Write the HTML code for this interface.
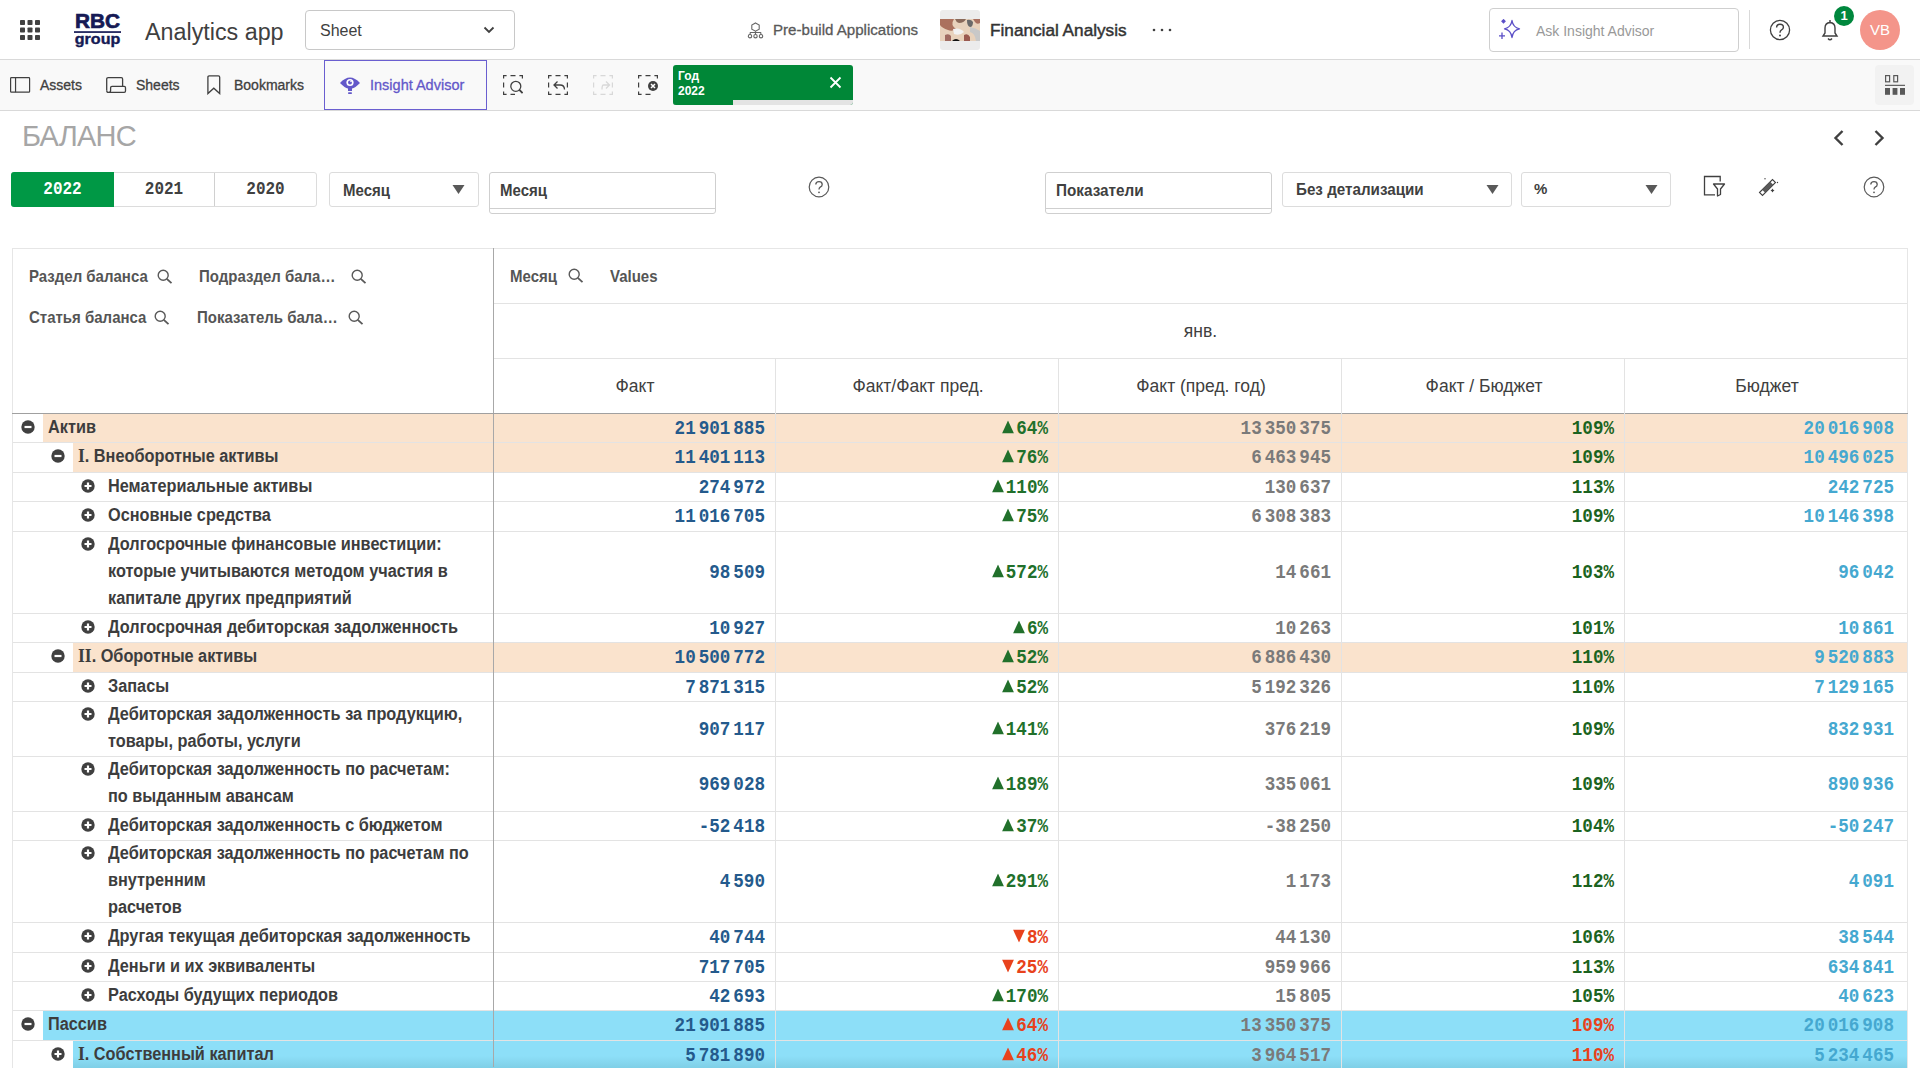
<!DOCTYPE html>
<html><head><meta charset="utf-8">
<style>
*{box-sizing:border-box;margin:0;padding:0}
html,body{width:1920px;height:1080px;overflow:hidden;background:#fff;font-family:"Liberation Sans",sans-serif;color:#404040}
.a{position:absolute}
.t{position:absolute;white-space:nowrap}
/* top bar */
#top{position:absolute;left:0;top:0;width:1920px;height:60px;background:#fff;border-bottom:1px solid #d9d9d9}
#tb{position:absolute;left:0;top:60px;width:1920px;height:51px;background:#f9f9f9;border-bottom:1px solid #d9d9d9}
.ico{position:absolute}
</style></head><body>

<div id="top">
  <!-- grid icon -->
  <svg class="ico" style="left:20px;top:20px" width="20" height="20" viewBox="0 0 20 20" fill="#404040">
    <rect x="0" y="0" width="5" height="5" rx="0.8"/><rect x="7.5" y="0" width="5" height="5" rx="0.8"/><rect x="15" y="0" width="5" height="5" rx="0.8"/>
    <rect x="0" y="7.5" width="5" height="5" rx="0.8"/><rect x="7.5" y="7.5" width="5" height="5" rx="0.8"/><rect x="15" y="7.5" width="5" height="5" rx="0.8"/>
    <rect x="0" y="15" width="5" height="5" rx="0.8"/><rect x="7.5" y="15" width="5" height="5" rx="0.8"/><rect x="15" y="15" width="5" height="5" rx="0.8"/>
  </svg>
  <!-- logo -->
  <svg class="ico" style="left:74px;top:10px" width="48" height="40" viewBox="0 0 48 40">
    <text x="1" y="18.3" font-family="Liberation Sans" font-weight="bold" font-size="20.5" fill="#161a55" stroke="#161a55" stroke-width="0.7" textLength="45" lengthAdjust="spacingAndGlyphs">RBC</text>
    <rect x="0" y="21.2" width="47" height="1.7" fill="#161a55"/>
    <text x="0.8" y="33.8" font-family="Liberation Sans" font-weight="bold" font-size="15.5" fill="#161a55" stroke="#161a55" stroke-width="0.4" textLength="45.5" lengthAdjust="spacingAndGlyphs">group</text>
  </svg>
  <div class="t" style="left:145px;top:17.5px;font:23.3px/28px 'Liberation Sans';color:#404040">Analytics app</div>
  <!-- Sheet dropdown -->
  <div class="a" style="left:305px;top:10px;width:210px;height:40px;border:1px solid #c8c8c8;border-radius:4px"></div>
  <div class="t" style="left:320px;top:20.7px;font:16px/20px 'Liberation Sans';color:#404040">Sheet</div>
  <svg class="ico" style="left:483px;top:26px" width="12" height="8" viewBox="0 0 12 8"><path d="M1.5 1.5 L6 6 L10.5 1.5" stroke="#404040" stroke-width="1.8" fill="none"/></svg>
  <!-- prebuild -->
  <svg class="ico" style="left:746px;top:20px" width="20" height="20" viewBox="0 0 20 20" fill="none" stroke="#666" stroke-width="1.1">
    <path d="M9.5 2.9 L13.2 5 V9.2 L9.5 11.2 L5.8 9.2 V5Z"/><path d="M9.5 11.2 V14.2 M4 14.8 L4.3 12.5 H14.7 L15 14.8"/><circle cx="4" cy="16.2" r="1.7"/><circle cx="9.5" cy="16.2" r="1.7"/><circle cx="15" cy="16.2" r="1.7"/>
  </svg>
  <div class="t" style="left:773px;top:20px;font:15.1px/20px 'Liberation Sans';color:#595959;-webkit-text-stroke:0.3px #595959">Pre-build Applications</div>
  <div class="a" style="left:940px;top:10px;width:40px;height:40px;background:#ececec;border-radius:3px"></div>
  <svg class="ico" style="left:940px;top:19px" width="40" height="22" viewBox="0 0 40 22">
    <rect width="40" height="22" fill="#e8d2bc"/>
    <path d="M0 0 H14 Q10 6 16 10 Q12 13 8 11 Q2 9 0 6Z" fill="#a0604c" opacity="0.85"/>
    <path d="M15 0 H26 Q24 4 19 4 Q16 3 15 0Z" fill="#8a6a5a"/>
    <path d="M27 1 Q31 0 33 3 Q33 8 30 8 Q27 7 27 1Z" fill="#6a6a6a"/>
    <path d="M33 0 H40 V4 Q37 6 35 3Z" fill="#a87060"/>
    <path d="M13 10 Q20 8 24 13 Q20 17 14 15Z" fill="#f2f2f2"/>
    <path d="M30 8 Q36 9 40 12 V22 H36 Q35 14 30 13Z" fill="#c8c8c8"/>
    <path d="M5 16 Q9 14 11 17 L11 22 H5Z" fill="#a06a60"/>
    <path d="M24 16 Q28 14 30 18 L30 22 H24Z" fill="#9a5a50"/>
    <path d="M12 22 Q16 18 20 22Z" fill="#111"/>
  </svg>
  <div class="t" style="left:990px;top:19px;font:17.2px/22px 'Liberation Sans';color:#333;-webkit-text-stroke:0.45px #333">Financial Analysis</div>
  <svg class="ico" style="left:1151px;top:27px" width="22" height="6" viewBox="0 0 22 6" fill="#404040"><circle cx="3" cy="3" r="1.3"/><circle cx="11" cy="3" r="1.3"/><circle cx="19" cy="3" r="1.3"/></svg>
  <!-- ask insight -->
  <div class="a" style="left:1489px;top:8px;width:250px;height:44px;border:1px solid #cfcfcf;border-radius:4px"></div>
  <svg class="ico" style="left:1499px;top:19px" width="24" height="22" viewBox="0 0 24 22" fill="none" stroke="#5b4fc7" stroke-width="1.3">
    <path d="M13 1.5 Q14 8.5 20.5 9.8 Q14 11 13 18.5 Q12 11 5.5 9.8 Q12 8.5 13 1.5Z" stroke-linejoin="round"/>
    <path d="M3 13.5 V20 M0 16.8 H6"/><path d="M4.5 0.8 L6 2.3 L4.5 3.8 L3 2.3Z" fill="#5b4fc7"/>
  </svg>
  <div class="t" style="left:1536px;top:21px;font:14px/20px 'Liberation Sans';color:#999">Ask Insight Advisor</div>
  <div class="a" style="left:1749px;top:10px;width:1px;height:39px;background:#d9d9d9"></div>
  <svg class="ico" style="left:1769px;top:19px" width="22" height="22" viewBox="0 0 22 22"><circle cx="11" cy="11" r="9.6" stroke="#404040" stroke-width="1.3" fill="none"/><path d="M7.6 8.4 Q7.6 5.2 11 5.2 Q14.4 5.2 14.4 8.2 Q14.4 10.2 12.3 11.2 Q11 11.9 11 13.8" stroke="#404040" stroke-width="1.4" fill="none"/><circle cx="11" cy="16.4" r="1" fill="#404040"/></svg>
  <svg class="ico" style="left:1819px;top:18px" width="22" height="24" viewBox="0 0 22 24" fill="none" stroke="#404040" stroke-width="1.4">
    <path d="M4 18 H18 L16 15 V10 Q16 5 11 4.5 Q6 5 6 10 V15 Z"/><path d="M9 20.5 Q11 23 13 20.5"/><path d="M11 2 V4.5"/>
  </svg>
  <div class="a" style="left:1834px;top:6px;width:20px;height:20px;border-radius:50%;background:#00873d"></div>
  <div class="t" style="left:1834px;top:8px;width:20px;text-align:center;font:bold 13px/16px 'Liberation Sans';color:#fff">1</div>
  <div class="a" style="left:1860px;top:10px;width:40px;height:40px;border-radius:50%;background:#f4958a"></div>
  <div class="t" style="left:1860px;top:20px;width:40px;text-align:center;font:15px/20px 'Liberation Sans';color:#fff">VB</div>
</div>

<div id="tb">
  <svg class="ico" style="left:10px;top:17px" width="21" height="16" viewBox="0 0 21 16" fill="none" stroke="#404040" stroke-width="1.2"><rect x="0.6" y="0.6" width="19" height="14.6" rx="0.8"/><path d="M5.55 0.6 V15.2"/></svg>
  <div class="t" style="left:40px;top:15px;font:14px/20px 'Liberation Sans';color:#404040;-webkit-text-stroke:0.3px #404040">Assets</div>
  <svg class="ico" style="left:106px;top:17px" width="21" height="17" viewBox="0 0 21 17" fill="none" stroke="#404040" stroke-width="1.3"><path d="M0.7 13.5 V2.2 Q0.7 0.7 2.2 0.7 H15.3 Q16.6 0.7 16.6 2 V9.4"/><path d="M0.7 13.5 Q0.7 15.4 2.5 15.4 Q4.6 15.4 4.6 13.5 V10.8 Q4.6 9.4 6 9.4 H18.2 Q19.5 9.4 19.5 10.8 V13.9 Q19.5 15.3 18.2 15.3 H2.5"/></svg>
  <div class="t" style="left:136px;top:15px;font:14px/20px 'Liberation Sans';color:#404040;-webkit-text-stroke:0.3px #404040">Sheets</div>
  <svg class="ico" style="left:207px;top:15px" width="14" height="20" viewBox="0 0 14 20" fill="none" stroke="#404040" stroke-width="1.3"><path d="M0.9 18.6 V2.2 Q0.9 0.9 2.2 0.9 H11.4 Q12.7 0.9 12.7 2.2 V18.6 L6.8 13.2 Z" stroke-linejoin="miter"/></svg>
  <div class="t" style="left:234px;top:15px;font:14px/20px 'Liberation Sans';color:#404040;-webkit-text-stroke:0.3px #404040">Bookmarks</div>
  <div class="a" style="left:324px;top:0px;width:163px;height:50px;border:1.5px solid #6a5fd0;background:#f9f9f9"></div>
  <svg class="ico" style="left:339px;top:15px" width="22" height="20" viewBox="0 0 22 20"><path d="M1 8 Q11 -3 21 8 Q16 13 13 13.5 V16 H9 V13.5 Q6 13 1 8Z" fill="#6358c9"/><circle cx="11" cy="7.5" r="3.6" fill="#fff"/><circle cx="11" cy="7.5" r="2" fill="#6358c9"/><circle cx="12" cy="6.5" r="0.8" fill="#fff"/><rect x="9" y="17.2" width="4" height="1.8" rx="0.8" fill="#6358c9"/></svg>
  <div class="t" style="left:370px;top:15px;font:14.5px/20px 'Liberation Sans';color:#6358c9;-webkit-text-stroke:0.3px #6358c9">Insight Advisor</div>
  <!-- selection tools -->
  <svg class="ico" style="left:503px;top:15px" width="20" height="20" viewBox="0 0 20 20" fill="none" stroke="#404040" stroke-width="1.2"><path d="M0.6 3.6 V0.6 H3.6 M7.5 0.6 H12.5 M16.4 0.6 H19.4 V3.6 M3.6 19.4 H0.6 V16.4 M0.6 12.5 V7.5 M7.5 19.4 H12"/><circle cx="12.8" cy="11.3" r="5" stroke-width="1.3"/><path d="M16.4 14.9 L19.6 18.2" stroke-width="1.9"/></svg>
  <svg class="ico" style="left:548px;top:15px" width="20" height="20" viewBox="0 0 20 20" fill="none" stroke="#404040" stroke-width="1.2"><path d="M0.6 3.6 V0.6 H3.6 M7.5 0.6 H12.5 M16.4 0.6 H19.4 V3.6 M19.4 7.5 V12.5 M19.4 16.4 V19.4 H16.4 M12.5 19.4 H7.5 M3.6 19.4 H0.6 V16.4 M0.6 12.5 V7.5"/><path d="M9.5 6.5 L6 10 L9.5 13.5 M6.3 10 H12 Q16.5 10 16.5 14.5" stroke-width="1.3"/></svg>
  <svg class="ico" style="left:593px;top:15px" width="20" height="20" viewBox="0 0 20 20" fill="none" stroke="#d8d8d8" stroke-width="1.2"><path d="M0.6 3.6 V0.6 H3.6 M7.5 0.6 H12.5 M16.4 0.6 H19.4 V3.6 M19.4 7.5 V12.5 M19.4 16.4 V19.4 H16.4 M12.5 19.4 H7.5 M3.6 19.4 H0.6 V16.4 M0.6 12.5 V7.5"/><path d="M13 6.5 L16.5 10 L13 13.5 M16.2 10 H10.5 Q9 10 9 14.5" stroke-width="1.3"/></svg>
  <svg class="ico" style="left:638px;top:15px" width="20" height="20" viewBox="0 0 20 20" fill="none" stroke="#404040" stroke-width="1.2"><path d="M0.6 3.6 V0.6 H3.6 M7.5 0.6 H12.5 M16.4 0.6 H19.4 V3.6 M12.5 19.4 H7.5 M3.6 19.4 H0.6 V16.4 M0.6 12.5 V7.5"/><circle cx="15" cy="11" r="5" fill="#404040" stroke="none"/><path d="M13 9 L17 13 M17 9 L13 13" stroke="#fff" stroke-width="1.5"/></svg>
  <!-- chip -->
  <div class="a" style="left:673px;top:5px;width:180px;height:40px;border-radius:3px;background:#008737;overflow:hidden">
    <div class="a" style="left:0;top:35px;width:180px;height:5px;background:#e3e3e3"></div>
    <div class="a" style="left:0;top:35px;width:60px;height:5px;background:#008737"></div>
  </div>
  <div class="t" style="left:678px;top:8px;font:bold 12px/16px 'Liberation Sans';color:#fff">Год</div>
  <div class="t" style="left:678px;top:23px;font:bold 12px/16px 'Liberation Sans';color:#fff">2022</div>
  <svg class="ico" style="left:829px;top:16px" width="13" height="13" viewBox="0 0 13 13"><path d="M1.5 1.5 L11.5 11.5 M11.5 1.5 L1.5 11.5" stroke="#fff" stroke-width="1.8"/></svg>
  <!-- right grid btn -->
  <div class="a" style="left:1875px;top:5px;width:39px;height:40px;border-radius:4px;background:#f2f2f2"></div>
  <svg class="ico" style="left:1885px;top:15px" width="20" height="20" viewBox="0 0 20 20"><rect x="0.6" y="0.6" width="4" height="6.2" fill="none" stroke="#595959" stroke-width="1.2"/><rect x="8.8" y="0.6" width="3.8" height="6.2" fill="none" stroke="#595959" stroke-width="1.2"/><rect x="0" y="9.8" width="20" height="1" fill="#404040"/><rect x="0" y="13" width="5" height="6.8" fill="#595959"/><rect x="7.6" y="13" width="4.8" height="6.8" fill="#595959"/><rect x="15" y="13" width="5" height="6.8" fill="#595959"/></svg>
</div>


<!--PAGE-->
<style>.ri{font-family:"Liberation Serif";font-size:17.5px}</style>
<div class="t" style="left:22px;top:119px;font:29px/34px 'Liberation Sans';color:#a6a6a6;letter-spacing:-0.8px">БАЛАНС</div>
<svg class="ico" style="left:1832px;top:129px" width="14" height="18" viewBox="0 0 14 18"><path d="M10.5 2 L3.5 9 L10.5 16" stroke="#404040" stroke-width="2.4" fill="none"/></svg>
<svg class="ico" style="left:1872px;top:129px" width="14" height="18" viewBox="0 0 14 18"><path d="M3.5 2 L10.5 9 L3.5 16" stroke="#404040" stroke-width="2.4" fill="none"/></svg>
<div class="a" style="left:11px;top:172px;width:306px;height:35px;border:1px solid #dcdcdc;border-radius:3px"></div>
<div class="a" style="left:11px;top:172px;width:103px;height:35px;background:#009845;border-radius:3px 0 0 3px"></div>
<div class="a" style="left:214px;top:173px;width:1px;height:33px;background:#d0d0d0"></div>
<div class="t" style="left:11px;top:180px;width:103px;text-align:center;font:bold 16px/20px 'Liberation Mono';color:#fff;transform:scaleY(1.09)">2022</div>
<div class="t" style="left:114px;top:180px;width:100px;text-align:center;font:bold 16px/20px 'Liberation Mono';color:#404040;transform:scaleY(1.09)">2021</div>
<div class="t" style="left:215px;top:180px;width:101px;text-align:center;font:bold 16px/20px 'Liberation Mono';color:#404040;transform:scaleY(1.09)">2020</div>
<div class="a" style="left:329px;top:172px;width:150px;height:35px;border:1px solid #dcdcdc;border-radius:3px"></div>
<div class="t" style="left:343px;top:180px;font:bold 15px/20px 'Liberation Sans';color:#404040;transform:scaleY(1.1)">Месяц</div>
<svg class="ico" style="left:452px;top:185px" width="13" height="9" viewBox="0 0 13 9"><path d="M0.5 0 H12.5 L6.5 9Z" fill="#595959"/></svg>
<div class="a" style="left:489px;top:172px;width:227px;height:42px;border:1px solid #cfcfcf;border-radius:3px"></div>
<div class="a" style="left:490px;top:208px;width:225px;height:1px;background:#cfcfcf"></div>
<div class="t" style="left:500px;top:180px;font:bold 15px/20px 'Liberation Sans';color:#404040;transform:scaleY(1.1)">Месяц</div>
<svg class="ico" style="left:808px;top:176px" width="22" height="22" viewBox="0 0 22 22"><circle cx="11" cy="11" r="9.8" stroke="#595959" stroke-width="1.2" fill="none"/><path d="M7.8 8.6 Q7.8 5.6 11 5.6 Q14.2 5.6 14.2 8.4 Q14.2 10.2 12.2 11.2 Q11 11.8 11 13.6" stroke="#595959" stroke-width="1.3" fill="none"/><circle cx="11" cy="16.3" r="0.9" fill="#595959"/></svg>
<div class="a" style="left:1045px;top:172px;width:227px;height:42px;border:1px solid #cfcfcf;border-radius:3px"></div>
<div class="a" style="left:1046px;top:208px;width:225px;height:1px;background:#cfcfcf"></div>
<div class="t" style="left:1056px;top:180px;font:bold 15.3px/20px 'Liberation Sans';color:#404040;transform:scaleY(1.1)">Показатели</div>
<div class="a" style="left:1282px;top:172px;width:230px;height:35px;border:1px solid #dcdcdc;border-radius:3px"></div>
<div class="t" style="left:1296px;top:179px;font:bold 15.2px/20px 'Liberation Sans';color:#404040;transform:scaleY(1.1)">Без детализации</div>
<svg class="ico" style="left:1486px;top:185px" width="13" height="9" viewBox="0 0 13 9"><path d="M0.5 0 H12.5 L6.5 9Z" fill="#595959"/></svg>
<div class="a" style="left:1521px;top:172px;width:150px;height:35px;border:1px solid #dcdcdc;border-radius:3px"></div>
<div class="t" style="left:1534px;top:179px;font:bold 15px/20px 'Liberation Sans';color:#404040;letter-spacing:-1px">%</div>
<svg class="ico" style="left:1645px;top:185px" width="13" height="9" viewBox="0 0 13 9"><path d="M0.5 0 H12.5 L6.5 9Z" fill="#595959"/></svg>
<svg class="ico" style="left:1703px;top:175px" width="23" height="22" viewBox="0 0 23 22" fill="none" stroke="#404040" stroke-width="1.3"><path d="M12 19.8 H1.5 V1.5 H17.2 V6.5"/><path d="M10.5 9 H21.5 L17.5 14 V19.5 L14.5 21 V14 Z" stroke-linejoin="round"/></svg>
<svg class="ico" style="left:1758px;top:177px" width="22" height="20" viewBox="0 0 22 20"><path d="M1.5 15.5 L14.5 2.5 L17.5 5.5 L4.5 18.5 Z" fill="none" stroke="#404040" stroke-width="1.1"/><path d="M4.2 12.8 L12.2 4.8 L15.2 7.8 L7.2 15.8 Z" fill="#595959"/><circle cx="7" cy="1.8" r="0.7" fill="#404040"/><circle cx="19.5" cy="5.5" r="0.7" fill="#404040"/><path d="M14.5 11.5 l0.8 1.2 l1.2 0.8 l-1.2 0.8 l-0.8 1.2 l-0.8 -1.2 l-1.2 -0.8 l1.2 -0.8z" fill="#404040"/></svg>
<svg class="ico" style="left:1863px;top:176px" width="22" height="22" viewBox="0 0 22 22"><circle cx="11" cy="11" r="9.8" stroke="#595959" stroke-width="1.2" fill="none"/><path d="M7.8 8.6 Q7.8 5.6 11 5.6 Q14.2 5.6 14.2 8.4 Q14.2 10.2 12.2 11.2 Q11 11.8 11 13.6" stroke="#595959" stroke-width="1.3" fill="none"/><circle cx="11" cy="16.3" r="0.9" fill="#595959"/></svg>

<div class="a" style="left:12px;top:248px;width:1896px;height:820px;border:1px solid #e6e6e6;border-bottom:none"></div>
<div class="t" style="left:29px;top:266px;font:bold 15px/20px 'Liberation Sans';color:#555;transform:translateY(0.9px) scaleY(1.12);transform-origin:50% 55%">Раздел баланса</div><svg class="ico" style="left:157px;top:269px" width="16" height="15" viewBox="0 0 16 15" fill="none" stroke="#595959" stroke-width="1.4"><circle cx="6.2" cy="6.2" r="5"/><path d="M9.8 9.8 L14.5 14.2" stroke-width="1.8"/></svg>
<div class="t" style="left:199px;top:266px;font:bold 15px/20px 'Liberation Sans';color:#555;transform:translateY(0.9px) scaleY(1.12);transform-origin:50% 55%">Подраздел бала…</div><svg class="ico" style="left:351px;top:269px" width="16" height="15" viewBox="0 0 16 15" fill="none" stroke="#595959" stroke-width="1.4"><circle cx="6.2" cy="6.2" r="5"/><path d="M9.8 9.8 L14.5 14.2" stroke-width="1.8"/></svg>
<div class="t" style="left:29px;top:307px;font:bold 15px/20px 'Liberation Sans';color:#555;transform:translateY(0.9px) scaleY(1.12);transform-origin:50% 55%">Статья баланса</div><svg class="ico" style="left:154px;top:310px" width="16" height="15" viewBox="0 0 16 15" fill="none" stroke="#595959" stroke-width="1.4"><circle cx="6.2" cy="6.2" r="5"/><path d="M9.8 9.8 L14.5 14.2" stroke-width="1.8"/></svg>
<div class="t" style="left:197px;top:307px;font:bold 15px/20px 'Liberation Sans';color:#555;transform:translateY(0.9px) scaleY(1.12);transform-origin:50% 55%">Показатель бала…</div><svg class="ico" style="left:348px;top:310px" width="16" height="15" viewBox="0 0 16 15" fill="none" stroke="#595959" stroke-width="1.4"><circle cx="6.2" cy="6.2" r="5"/><path d="M9.8 9.8 L14.5 14.2" stroke-width="1.8"/></svg>
<div class="t" style="left:510px;top:266px;font:bold 15px/20px 'Liberation Sans';color:#555;transform:translateY(0.9px) scaleY(1.12);transform-origin:50% 55%">Месяц</div><svg class="ico" style="left:568px;top:268px" width="16" height="15" viewBox="0 0 16 15" fill="none" stroke="#595959" stroke-width="1.4"><circle cx="6.2" cy="6.2" r="5"/><path d="M9.8 9.8 L14.5 14.2" stroke-width="1.8"/></svg>
<div class="t" style="left:610px;top:266px;font:bold 15px/20px 'Liberation Sans';color:#555;transform:translateY(0.9px) scaleY(1.12);transform-origin:50% 55%">Values</div>
<div class="t" style="left:494px;top:320px;width:1413px;font:17.5px/22px 'Liberation Sans';color:#404040;text-align:center">янв.</div>
<div class="t" style="left:494px;top:375px;width:282px;font:17.5px/22px 'Liberation Sans';color:#404040;text-align:center">Факт</div>
<div class="t" style="left:777px;top:375px;width:282px;font:17.5px/22px 'Liberation Sans';color:#404040;text-align:center">Факт/Факт пред.</div>
<div class="t" style="left:1060px;top:375px;width:282px;font:17.5px/22px 'Liberation Sans';color:#404040;text-align:center">Факт (пред. год)</div>
<div class="t" style="left:1343px;top:375px;width:282px;font:17.5px/22px 'Liberation Sans';color:#404040;text-align:center">Факт / Бюджет</div>
<div class="t" style="left:1626px;top:375px;width:282px;font:17.5px/22px 'Liberation Sans';color:#404040;text-align:center">Бюджет</div>
<div class="a" style="left:43px;top:414px;width:1864px;height:28px;background:#fae3cd"></div>
<div class="a" style="left:13px;top:442px;width:1894px;height:1px;background:#e3e3e3"></div>
<div class="t" style="left:48px;top:414.70px;font:bold 16.3px/25.000px 'Liberation Sans';color:#3d3d3d;transform:scaleY(1.08);transform-origin:50% 50%">Актив</div>
<svg class="ico" style="left:21px;top:419.8px" width="14" height="14" viewBox="0 0 14 14"><circle cx="7" cy="7" r="6.7" fill="#404040"/><path d="M3.5 7 H10.5" stroke="#fff" stroke-width="2.2"/></svg>
<div class="t" style="left:485px;top:417.8px;width:280px;text-align:right;font:bold 17.6px/20px 'Liberation Mono';word-spacing:-7.6px;transform:translateY(0.1px) scaleY(1.1);color:#245a8c">21 901 885</div>
<div class="t" style="left:768px;top:417.8px;width:280px;text-align:right;font:bold 17.6px/20px 'Liberation Mono';word-spacing:-7.6px;transform:translateY(0.1px) scaleY(1.1);color:#21702b"><svg width="12" height="12" viewBox="0 0 12 12" style="margin-right:2px;vertical-align:0px"><path d="M6 0 L12 12 H0Z" fill="#21702b"/></svg>64%</div>
<div class="t" style="left:1051px;top:417.8px;width:280px;text-align:right;font:bold 17.6px/20px 'Liberation Mono';word-spacing:-7.6px;transform:translateY(0.1px) scaleY(1.1);color:#7a7a7a">13 350 375</div>
<div class="t" style="left:1334px;top:417.8px;width:280px;text-align:right;font:bold 17.6px/20px 'Liberation Mono';word-spacing:-7.6px;transform:translateY(0.1px) scaleY(1.1);color:#1b6320">109%</div>
<div class="t" style="left:1614px;top:417.8px;width:280px;text-align:right;font:bold 17.6px/20px 'Liberation Mono';word-spacing:-7.6px;transform:translateY(0.1px) scaleY(1.1);color:#45a8d0">20 016 908</div>
<div class="a" style="left:73px;top:443px;width:1834px;height:29px;background:#fae3cd"></div>
<div class="a" style="left:13px;top:472px;width:1894px;height:1px;background:#e3e3e3"></div>
<div class="t" style="left:78px;top:444.20px;font:bold 16.3px/25.000px 'Liberation Sans';color:#3d3d3d;transform:scaleY(1.08);transform-origin:50% 50%"><span class=ri>I</span>. Внеоборотные активы</div>
<svg class="ico" style="left:51px;top:449.3px" width="14" height="14" viewBox="0 0 14 14"><circle cx="7" cy="7" r="6.7" fill="#404040"/><path d="M3.5 7 H10.5" stroke="#fff" stroke-width="2.2"/></svg>
<div class="t" style="left:485px;top:447.3px;width:280px;text-align:right;font:bold 17.6px/20px 'Liberation Mono';word-spacing:-7.6px;transform:translateY(0.1px) scaleY(1.1);color:#245a8c">11 401 113</div>
<div class="t" style="left:768px;top:447.3px;width:280px;text-align:right;font:bold 17.6px/20px 'Liberation Mono';word-spacing:-7.6px;transform:translateY(0.1px) scaleY(1.1);color:#21702b"><svg width="12" height="12" viewBox="0 0 12 12" style="margin-right:2px;vertical-align:0px"><path d="M6 0 L12 12 H0Z" fill="#21702b"/></svg>76%</div>
<div class="t" style="left:1051px;top:447.3px;width:280px;text-align:right;font:bold 17.6px/20px 'Liberation Mono';word-spacing:-7.6px;transform:translateY(0.1px) scaleY(1.1);color:#7a7a7a">6 463 945</div>
<div class="t" style="left:1334px;top:447.3px;width:280px;text-align:right;font:bold 17.6px/20px 'Liberation Mono';word-spacing:-7.6px;transform:translateY(0.1px) scaleY(1.1);color:#1b6320">109%</div>
<div class="t" style="left:1614px;top:447.3px;width:280px;text-align:right;font:bold 17.6px/20px 'Liberation Mono';word-spacing:-7.6px;transform:translateY(0.1px) scaleY(1.1);color:#45a8d0">10 496 025</div>
<div class="a" style="left:13px;top:501px;width:1894px;height:1px;background:#e3e3e3"></div>
<div class="t" style="left:108px;top:473.70px;font:bold 16.3px/25.000px 'Liberation Sans';color:#3d3d3d;transform:scaleY(1.08);transform-origin:50% 50%">Нематериальные активы</div>
<svg class="ico" style="left:81px;top:478.8px" width="14" height="14" viewBox="0 0 14 14"><circle cx="7" cy="7" r="6.7" fill="#404040"/><path d="M3.5 7 H10.5 M7 3.5 V10.5" stroke="#fff" stroke-width="2.2"/></svg>
<div class="t" style="left:485px;top:476.8px;width:280px;text-align:right;font:bold 17.6px/20px 'Liberation Mono';word-spacing:-7.6px;transform:translateY(0.1px) scaleY(1.1);color:#245a8c">274 972</div>
<div class="t" style="left:768px;top:476.8px;width:280px;text-align:right;font:bold 17.6px/20px 'Liberation Mono';word-spacing:-7.6px;transform:translateY(0.1px) scaleY(1.1);color:#21702b"><svg width="12" height="12" viewBox="0 0 12 12" style="margin-right:2px;vertical-align:0px"><path d="M6 0 L12 12 H0Z" fill="#21702b"/></svg>110%</div>
<div class="t" style="left:1051px;top:476.8px;width:280px;text-align:right;font:bold 17.6px/20px 'Liberation Mono';word-spacing:-7.6px;transform:translateY(0.1px) scaleY(1.1);color:#7a7a7a">130 637</div>
<div class="t" style="left:1334px;top:476.8px;width:280px;text-align:right;font:bold 17.6px/20px 'Liberation Mono';word-spacing:-7.6px;transform:translateY(0.1px) scaleY(1.1);color:#1b6320">113%</div>
<div class="t" style="left:1614px;top:476.8px;width:280px;text-align:right;font:bold 17.6px/20px 'Liberation Mono';word-spacing:-7.6px;transform:translateY(0.1px) scaleY(1.1);color:#45a8d0">242 725</div>
<div class="a" style="left:13px;top:531px;width:1894px;height:1px;background:#e3e3e3"></div>
<div class="t" style="left:108px;top:503.20px;font:bold 16.3px/25.000px 'Liberation Sans';color:#3d3d3d;transform:scaleY(1.08);transform-origin:50% 50%">Основные средства</div>
<svg class="ico" style="left:81px;top:508.29999999999995px" width="14" height="14" viewBox="0 0 14 14"><circle cx="7" cy="7" r="6.7" fill="#404040"/><path d="M3.5 7 H10.5 M7 3.5 V10.5" stroke="#fff" stroke-width="2.2"/></svg>
<div class="t" style="left:485px;top:506.3px;width:280px;text-align:right;font:bold 17.6px/20px 'Liberation Mono';word-spacing:-7.6px;transform:translateY(0.1px) scaleY(1.1);color:#245a8c">11 016 705</div>
<div class="t" style="left:768px;top:506.3px;width:280px;text-align:right;font:bold 17.6px/20px 'Liberation Mono';word-spacing:-7.6px;transform:translateY(0.1px) scaleY(1.1);color:#21702b"><svg width="12" height="12" viewBox="0 0 12 12" style="margin-right:2px;vertical-align:0px"><path d="M6 0 L12 12 H0Z" fill="#21702b"/></svg>75%</div>
<div class="t" style="left:1051px;top:506.3px;width:280px;text-align:right;font:bold 17.6px/20px 'Liberation Mono';word-spacing:-7.6px;transform:translateY(0.1px) scaleY(1.1);color:#7a7a7a">6 308 383</div>
<div class="t" style="left:1334px;top:506.3px;width:280px;text-align:right;font:bold 17.6px/20px 'Liberation Mono';word-spacing:-7.6px;transform:translateY(0.1px) scaleY(1.1);color:#1b6320">109%</div>
<div class="t" style="left:1614px;top:506.3px;width:280px;text-align:right;font:bold 17.6px/20px 'Liberation Mono';word-spacing:-7.6px;transform:translateY(0.1px) scaleY(1.1);color:#45a8d0">10 146 398</div>
<div class="a" style="left:13px;top:613px;width:1894px;height:1px;background:#e3e3e3"></div>
<div class="t" style="left:108px;top:534.20px;font:bold 16.3px/25.000px 'Liberation Sans';color:#3d3d3d;transform:scaleY(1.08);transform-origin:50% 50%">Долгосрочные финансовые инвестиции:<br>которые учитываются методом участия в<br>капитале других предприятий</div>
<svg class="ico" style="left:81px;top:537.3px" width="14" height="14" viewBox="0 0 14 14"><circle cx="7" cy="7" r="6.7" fill="#404040"/><path d="M3.5 7 H10.5 M7 3.5 V10.5" stroke="#fff" stroke-width="2.2"/></svg>
<div class="t" style="left:485px;top:562.3px;width:280px;text-align:right;font:bold 17.6px/20px 'Liberation Mono';word-spacing:-7.6px;transform:translateY(0.1px) scaleY(1.1);color:#245a8c">98 509</div>
<div class="t" style="left:768px;top:562.3px;width:280px;text-align:right;font:bold 17.6px/20px 'Liberation Mono';word-spacing:-7.6px;transform:translateY(0.1px) scaleY(1.1);color:#21702b"><svg width="12" height="12" viewBox="0 0 12 12" style="margin-right:2px;vertical-align:0px"><path d="M6 0 L12 12 H0Z" fill="#21702b"/></svg>572%</div>
<div class="t" style="left:1051px;top:562.3px;width:280px;text-align:right;font:bold 17.6px/20px 'Liberation Mono';word-spacing:-7.6px;transform:translateY(0.1px) scaleY(1.1);color:#7a7a7a">14 661</div>
<div class="t" style="left:1334px;top:562.3px;width:280px;text-align:right;font:bold 17.6px/20px 'Liberation Mono';word-spacing:-7.6px;transform:translateY(0.1px) scaleY(1.1);color:#1b6320">103%</div>
<div class="t" style="left:1614px;top:562.3px;width:280px;text-align:right;font:bold 17.6px/20px 'Liberation Mono';word-spacing:-7.6px;transform:translateY(0.1px) scaleY(1.1);color:#45a8d0">96 042</div>
<div class="a" style="left:13px;top:642px;width:1894px;height:1px;background:#e3e3e3"></div>
<div class="t" style="left:108px;top:614.70px;font:bold 16.3px/25.000px 'Liberation Sans';color:#3d3d3d;transform:scaleY(1.08);transform-origin:50% 50%">Долгосрочная дебиторская задолженность</div>
<svg class="ico" style="left:81px;top:619.8px" width="14" height="14" viewBox="0 0 14 14"><circle cx="7" cy="7" r="6.7" fill="#404040"/><path d="M3.5 7 H10.5 M7 3.5 V10.5" stroke="#fff" stroke-width="2.2"/></svg>
<div class="t" style="left:485px;top:617.8px;width:280px;text-align:right;font:bold 17.6px/20px 'Liberation Mono';word-spacing:-7.6px;transform:translateY(0.1px) scaleY(1.1);color:#245a8c">10 927</div>
<div class="t" style="left:768px;top:617.8px;width:280px;text-align:right;font:bold 17.6px/20px 'Liberation Mono';word-spacing:-7.6px;transform:translateY(0.1px) scaleY(1.1);color:#21702b"><svg width="12" height="12" viewBox="0 0 12 12" style="margin-right:2px;vertical-align:0px"><path d="M6 0 L12 12 H0Z" fill="#21702b"/></svg>6%</div>
<div class="t" style="left:1051px;top:617.8px;width:280px;text-align:right;font:bold 17.6px/20px 'Liberation Mono';word-spacing:-7.6px;transform:translateY(0.1px) scaleY(1.1);color:#7a7a7a">10 263</div>
<div class="t" style="left:1334px;top:617.8px;width:280px;text-align:right;font:bold 17.6px/20px 'Liberation Mono';word-spacing:-7.6px;transform:translateY(0.1px) scaleY(1.1);color:#1b6320">101%</div>
<div class="t" style="left:1614px;top:617.8px;width:280px;text-align:right;font:bold 17.6px/20px 'Liberation Mono';word-spacing:-7.6px;transform:translateY(0.1px) scaleY(1.1);color:#45a8d0">10 861</div>
<div class="a" style="left:73px;top:643px;width:1834px;height:29px;background:#fae3cd"></div>
<div class="a" style="left:13px;top:672px;width:1894px;height:1px;background:#e3e3e3"></div>
<div class="t" style="left:78px;top:644.20px;font:bold 16.3px/25.000px 'Liberation Sans';color:#3d3d3d;transform:scaleY(1.08);transform-origin:50% 50%"><span class=ri>II</span>. Оборотные активы</div>
<svg class="ico" style="left:51px;top:649.3px" width="14" height="14" viewBox="0 0 14 14"><circle cx="7" cy="7" r="6.7" fill="#404040"/><path d="M3.5 7 H10.5" stroke="#fff" stroke-width="2.2"/></svg>
<div class="t" style="left:485px;top:647.3px;width:280px;text-align:right;font:bold 17.6px/20px 'Liberation Mono';word-spacing:-7.6px;transform:translateY(0.1px) scaleY(1.1);color:#245a8c">10 500 772</div>
<div class="t" style="left:768px;top:647.3px;width:280px;text-align:right;font:bold 17.6px/20px 'Liberation Mono';word-spacing:-7.6px;transform:translateY(0.1px) scaleY(1.1);color:#21702b"><svg width="12" height="12" viewBox="0 0 12 12" style="margin-right:2px;vertical-align:0px"><path d="M6 0 L12 12 H0Z" fill="#21702b"/></svg>52%</div>
<div class="t" style="left:1051px;top:647.3px;width:280px;text-align:right;font:bold 17.6px/20px 'Liberation Mono';word-spacing:-7.6px;transform:translateY(0.1px) scaleY(1.1);color:#7a7a7a">6 886 430</div>
<div class="t" style="left:1334px;top:647.3px;width:280px;text-align:right;font:bold 17.6px/20px 'Liberation Mono';word-spacing:-7.6px;transform:translateY(0.1px) scaleY(1.1);color:#1b6320">110%</div>
<div class="t" style="left:1614px;top:647.3px;width:280px;text-align:right;font:bold 17.6px/20px 'Liberation Mono';word-spacing:-7.6px;transform:translateY(0.1px) scaleY(1.1);color:#45a8d0">9 520 883</div>
<div class="a" style="left:13px;top:701px;width:1894px;height:1px;background:#e3e3e3"></div>
<div class="t" style="left:108px;top:673.70px;font:bold 16.3px/25.000px 'Liberation Sans';color:#3d3d3d;transform:scaleY(1.08);transform-origin:50% 50%">Запасы</div>
<svg class="ico" style="left:81px;top:678.8px" width="14" height="14" viewBox="0 0 14 14"><circle cx="7" cy="7" r="6.7" fill="#404040"/><path d="M3.5 7 H10.5 M7 3.5 V10.5" stroke="#fff" stroke-width="2.2"/></svg>
<div class="t" style="left:485px;top:676.8px;width:280px;text-align:right;font:bold 17.6px/20px 'Liberation Mono';word-spacing:-7.6px;transform:translateY(0.1px) scaleY(1.1);color:#245a8c">7 871 315</div>
<div class="t" style="left:768px;top:676.8px;width:280px;text-align:right;font:bold 17.6px/20px 'Liberation Mono';word-spacing:-7.6px;transform:translateY(0.1px) scaleY(1.1);color:#21702b"><svg width="12" height="12" viewBox="0 0 12 12" style="margin-right:2px;vertical-align:0px"><path d="M6 0 L12 12 H0Z" fill="#21702b"/></svg>52%</div>
<div class="t" style="left:1051px;top:676.8px;width:280px;text-align:right;font:bold 17.6px/20px 'Liberation Mono';word-spacing:-7.6px;transform:translateY(0.1px) scaleY(1.1);color:#7a7a7a">5 192 326</div>
<div class="t" style="left:1334px;top:676.8px;width:280px;text-align:right;font:bold 17.6px/20px 'Liberation Mono';word-spacing:-7.6px;transform:translateY(0.1px) scaleY(1.1);color:#1b6320">110%</div>
<div class="t" style="left:1614px;top:676.8px;width:280px;text-align:right;font:bold 17.6px/20px 'Liberation Mono';word-spacing:-7.6px;transform:translateY(0.1px) scaleY(1.1);color:#45a8d0">7 129 165</div>
<div class="a" style="left:13px;top:756px;width:1894px;height:1px;background:#e3e3e3"></div>
<div class="t" style="left:108px;top:703.20px;font:bold 16.3px/25.000px 'Liberation Sans';color:#3d3d3d;transform:scaleY(1.08);transform-origin:50% 50%">Дебиторская задолженность за продукцию,<br>товары, работы, услуги</div>
<svg class="ico" style="left:81px;top:707.3px" width="14" height="14" viewBox="0 0 14 14"><circle cx="7" cy="7" r="6.7" fill="#404040"/><path d="M3.5 7 H10.5 M7 3.5 V10.5" stroke="#fff" stroke-width="2.2"/></svg>
<div class="t" style="left:485px;top:718.8px;width:280px;text-align:right;font:bold 17.6px/20px 'Liberation Mono';word-spacing:-7.6px;transform:translateY(0.1px) scaleY(1.1);color:#245a8c">907 117</div>
<div class="t" style="left:768px;top:718.8px;width:280px;text-align:right;font:bold 17.6px/20px 'Liberation Mono';word-spacing:-7.6px;transform:translateY(0.1px) scaleY(1.1);color:#21702b"><svg width="12" height="12" viewBox="0 0 12 12" style="margin-right:2px;vertical-align:0px"><path d="M6 0 L12 12 H0Z" fill="#21702b"/></svg>141%</div>
<div class="t" style="left:1051px;top:718.8px;width:280px;text-align:right;font:bold 17.6px/20px 'Liberation Mono';word-spacing:-7.6px;transform:translateY(0.1px) scaleY(1.1);color:#7a7a7a">376 219</div>
<div class="t" style="left:1334px;top:718.8px;width:280px;text-align:right;font:bold 17.6px/20px 'Liberation Mono';word-spacing:-7.6px;transform:translateY(0.1px) scaleY(1.1);color:#1b6320">109%</div>
<div class="t" style="left:1614px;top:718.8px;width:280px;text-align:right;font:bold 17.6px/20px 'Liberation Mono';word-spacing:-7.6px;transform:translateY(0.1px) scaleY(1.1);color:#45a8d0">832 931</div>
<div class="a" style="left:13px;top:811px;width:1894px;height:1px;background:#e3e3e3"></div>
<div class="t" style="left:108px;top:758.20px;font:bold 16.3px/25.000px 'Liberation Sans';color:#3d3d3d;transform:scaleY(1.08);transform-origin:50% 50%">Дебиторская задолженность по расчетам:<br>по выданным авансам</div>
<svg class="ico" style="left:81px;top:762.3px" width="14" height="14" viewBox="0 0 14 14"><circle cx="7" cy="7" r="6.7" fill="#404040"/><path d="M3.5 7 H10.5 M7 3.5 V10.5" stroke="#fff" stroke-width="2.2"/></svg>
<div class="t" style="left:485px;top:773.8px;width:280px;text-align:right;font:bold 17.6px/20px 'Liberation Mono';word-spacing:-7.6px;transform:translateY(0.1px) scaleY(1.1);color:#245a8c">969 028</div>
<div class="t" style="left:768px;top:773.8px;width:280px;text-align:right;font:bold 17.6px/20px 'Liberation Mono';word-spacing:-7.6px;transform:translateY(0.1px) scaleY(1.1);color:#21702b"><svg width="12" height="12" viewBox="0 0 12 12" style="margin-right:2px;vertical-align:0px"><path d="M6 0 L12 12 H0Z" fill="#21702b"/></svg>189%</div>
<div class="t" style="left:1051px;top:773.8px;width:280px;text-align:right;font:bold 17.6px/20px 'Liberation Mono';word-spacing:-7.6px;transform:translateY(0.1px) scaleY(1.1);color:#7a7a7a">335 061</div>
<div class="t" style="left:1334px;top:773.8px;width:280px;text-align:right;font:bold 17.6px/20px 'Liberation Mono';word-spacing:-7.6px;transform:translateY(0.1px) scaleY(1.1);color:#1b6320">109%</div>
<div class="t" style="left:1614px;top:773.8px;width:280px;text-align:right;font:bold 17.6px/20px 'Liberation Mono';word-spacing:-7.6px;transform:translateY(0.1px) scaleY(1.1);color:#45a8d0">890 936</div>
<div class="a" style="left:13px;top:840px;width:1894px;height:1px;background:#e3e3e3"></div>
<div class="t" style="left:108px;top:812.70px;font:bold 16.3px/25.000px 'Liberation Sans';color:#3d3d3d;transform:scaleY(1.08);transform-origin:50% 50%">Дебиторская задолженность с бюджетом</div>
<svg class="ico" style="left:81px;top:817.8px" width="14" height="14" viewBox="0 0 14 14"><circle cx="7" cy="7" r="6.7" fill="#404040"/><path d="M3.5 7 H10.5 M7 3.5 V10.5" stroke="#fff" stroke-width="2.2"/></svg>
<div class="t" style="left:485px;top:815.8px;width:280px;text-align:right;font:bold 17.6px/20px 'Liberation Mono';word-spacing:-7.6px;transform:translateY(0.1px) scaleY(1.1);color:#245a8c">-52 418</div>
<div class="t" style="left:768px;top:815.8px;width:280px;text-align:right;font:bold 17.6px/20px 'Liberation Mono';word-spacing:-7.6px;transform:translateY(0.1px) scaleY(1.1);color:#21702b"><svg width="12" height="12" viewBox="0 0 12 12" style="margin-right:2px;vertical-align:0px"><path d="M6 0 L12 12 H0Z" fill="#21702b"/></svg>37%</div>
<div class="t" style="left:1051px;top:815.8px;width:280px;text-align:right;font:bold 17.6px/20px 'Liberation Mono';word-spacing:-7.6px;transform:translateY(0.1px) scaleY(1.1);color:#7a7a7a">-38 250</div>
<div class="t" style="left:1334px;top:815.8px;width:280px;text-align:right;font:bold 17.6px/20px 'Liberation Mono';word-spacing:-7.6px;transform:translateY(0.1px) scaleY(1.1);color:#1b6320">104%</div>
<div class="t" style="left:1614px;top:815.8px;width:280px;text-align:right;font:bold 17.6px/20px 'Liberation Mono';word-spacing:-7.6px;transform:translateY(0.1px) scaleY(1.1);color:#45a8d0">-50 247</div>
<div class="a" style="left:13px;top:922px;width:1894px;height:1px;background:#e3e3e3"></div>
<div class="t" style="left:108px;top:843.20px;font:bold 16.3px/25.000px 'Liberation Sans';color:#3d3d3d;transform:scaleY(1.08);transform-origin:50% 50%">Дебиторская задолженность по расчетам по<br>внутренним<br>расчетов</div>
<svg class="ico" style="left:81px;top:846.3px" width="14" height="14" viewBox="0 0 14 14"><circle cx="7" cy="7" r="6.7" fill="#404040"/><path d="M3.5 7 H10.5 M7 3.5 V10.5" stroke="#fff" stroke-width="2.2"/></svg>
<div class="t" style="left:485px;top:871.3px;width:280px;text-align:right;font:bold 17.6px/20px 'Liberation Mono';word-spacing:-7.6px;transform:translateY(0.1px) scaleY(1.1);color:#245a8c">4 590</div>
<div class="t" style="left:768px;top:871.3px;width:280px;text-align:right;font:bold 17.6px/20px 'Liberation Mono';word-spacing:-7.6px;transform:translateY(0.1px) scaleY(1.1);color:#21702b"><svg width="12" height="12" viewBox="0 0 12 12" style="margin-right:2px;vertical-align:0px"><path d="M6 0 L12 12 H0Z" fill="#21702b"/></svg>291%</div>
<div class="t" style="left:1051px;top:871.3px;width:280px;text-align:right;font:bold 17.6px/20px 'Liberation Mono';word-spacing:-7.6px;transform:translateY(0.1px) scaleY(1.1);color:#7a7a7a">1 173</div>
<div class="t" style="left:1334px;top:871.3px;width:280px;text-align:right;font:bold 17.6px/20px 'Liberation Mono';word-spacing:-7.6px;transform:translateY(0.1px) scaleY(1.1);color:#1b6320">112%</div>
<div class="t" style="left:1614px;top:871.3px;width:280px;text-align:right;font:bold 17.6px/20px 'Liberation Mono';word-spacing:-7.6px;transform:translateY(0.1px) scaleY(1.1);color:#45a8d0">4 091</div>
<div class="a" style="left:13px;top:952px;width:1894px;height:1px;background:#e3e3e3"></div>
<div class="t" style="left:108px;top:924.20px;font:bold 16.3px/25.000px 'Liberation Sans';color:#3d3d3d;transform:scaleY(1.08);transform-origin:50% 50%">Другая текущая дебиторская задолженность</div>
<svg class="ico" style="left:81px;top:929.3px" width="14" height="14" viewBox="0 0 14 14"><circle cx="7" cy="7" r="6.7" fill="#404040"/><path d="M3.5 7 H10.5 M7 3.5 V10.5" stroke="#fff" stroke-width="2.2"/></svg>
<div class="t" style="left:485px;top:927.3px;width:280px;text-align:right;font:bold 17.6px/20px 'Liberation Mono';word-spacing:-7.6px;transform:translateY(0.1px) scaleY(1.1);color:#245a8c">40 744</div>
<div class="t" style="left:768px;top:927.3px;width:280px;text-align:right;font:bold 17.6px/20px 'Liberation Mono';word-spacing:-7.6px;transform:translateY(0.1px) scaleY(1.1);color:#e8421c"><svg width="12" height="12" viewBox="0 0 12 12" style="margin-right:2px;vertical-align:0px"><path d="M0 0 H12 L6 12Z" fill="#e8421c"/></svg>8%</div>
<div class="t" style="left:1051px;top:927.3px;width:280px;text-align:right;font:bold 17.6px/20px 'Liberation Mono';word-spacing:-7.6px;transform:translateY(0.1px) scaleY(1.1);color:#7a7a7a">44 130</div>
<div class="t" style="left:1334px;top:927.3px;width:280px;text-align:right;font:bold 17.6px/20px 'Liberation Mono';word-spacing:-7.6px;transform:translateY(0.1px) scaleY(1.1);color:#1b6320">106%</div>
<div class="t" style="left:1614px;top:927.3px;width:280px;text-align:right;font:bold 17.6px/20px 'Liberation Mono';word-spacing:-7.6px;transform:translateY(0.1px) scaleY(1.1);color:#45a8d0">38 544</div>
<div class="a" style="left:13px;top:981px;width:1894px;height:1px;background:#e3e3e3"></div>
<div class="t" style="left:108px;top:953.70px;font:bold 16.3px/25.000px 'Liberation Sans';color:#3d3d3d;transform:scaleY(1.08);transform-origin:50% 50%">Деньги и их эквиваленты</div>
<svg class="ico" style="left:81px;top:958.8px" width="14" height="14" viewBox="0 0 14 14"><circle cx="7" cy="7" r="6.7" fill="#404040"/><path d="M3.5 7 H10.5 M7 3.5 V10.5" stroke="#fff" stroke-width="2.2"/></svg>
<div class="t" style="left:485px;top:956.8px;width:280px;text-align:right;font:bold 17.6px/20px 'Liberation Mono';word-spacing:-7.6px;transform:translateY(0.1px) scaleY(1.1);color:#245a8c">717 705</div>
<div class="t" style="left:768px;top:956.8px;width:280px;text-align:right;font:bold 17.6px/20px 'Liberation Mono';word-spacing:-7.6px;transform:translateY(0.1px) scaleY(1.1);color:#e8421c"><svg width="12" height="12" viewBox="0 0 12 12" style="margin-right:2px;vertical-align:0px"><path d="M0 0 H12 L6 12Z" fill="#e8421c"/></svg>25%</div>
<div class="t" style="left:1051px;top:956.8px;width:280px;text-align:right;font:bold 17.6px/20px 'Liberation Mono';word-spacing:-7.6px;transform:translateY(0.1px) scaleY(1.1);color:#7a7a7a">959 966</div>
<div class="t" style="left:1334px;top:956.8px;width:280px;text-align:right;font:bold 17.6px/20px 'Liberation Mono';word-spacing:-7.6px;transform:translateY(0.1px) scaleY(1.1);color:#1b6320">113%</div>
<div class="t" style="left:1614px;top:956.8px;width:280px;text-align:right;font:bold 17.6px/20px 'Liberation Mono';word-spacing:-7.6px;transform:translateY(0.1px) scaleY(1.1);color:#45a8d0">634 841</div>
<div class="a" style="left:13px;top:1010px;width:1894px;height:1px;background:#e3e3e3"></div>
<div class="t" style="left:108px;top:982.70px;font:bold 16.3px/25.000px 'Liberation Sans';color:#3d3d3d;transform:scaleY(1.08);transform-origin:50% 50%">Расходы будущих периодов</div>
<svg class="ico" style="left:81px;top:987.8px" width="14" height="14" viewBox="0 0 14 14"><circle cx="7" cy="7" r="6.7" fill="#404040"/><path d="M3.5 7 H10.5 M7 3.5 V10.5" stroke="#fff" stroke-width="2.2"/></svg>
<div class="t" style="left:485px;top:985.8px;width:280px;text-align:right;font:bold 17.6px/20px 'Liberation Mono';word-spacing:-7.6px;transform:translateY(0.1px) scaleY(1.1);color:#245a8c">42 693</div>
<div class="t" style="left:768px;top:985.8px;width:280px;text-align:right;font:bold 17.6px/20px 'Liberation Mono';word-spacing:-7.6px;transform:translateY(0.1px) scaleY(1.1);color:#21702b"><svg width="12" height="12" viewBox="0 0 12 12" style="margin-right:2px;vertical-align:0px"><path d="M6 0 L12 12 H0Z" fill="#21702b"/></svg>170%</div>
<div class="t" style="left:1051px;top:985.8px;width:280px;text-align:right;font:bold 17.6px/20px 'Liberation Mono';word-spacing:-7.6px;transform:translateY(0.1px) scaleY(1.1);color:#7a7a7a">15 805</div>
<div class="t" style="left:1334px;top:985.8px;width:280px;text-align:right;font:bold 17.6px/20px 'Liberation Mono';word-spacing:-7.6px;transform:translateY(0.1px) scaleY(1.1);color:#1b6320">105%</div>
<div class="t" style="left:1614px;top:985.8px;width:280px;text-align:right;font:bold 17.6px/20px 'Liberation Mono';word-spacing:-7.6px;transform:translateY(0.1px) scaleY(1.1);color:#45a8d0">40 623</div>
<div class="a" style="left:43px;top:1011px;width:1864px;height:29px;background:#8ddff8"></div>
<div class="a" style="left:13px;top:1040px;width:1894px;height:1px;background:#e3e3e3"></div>
<div class="t" style="left:48px;top:1012.20px;font:bold 16.3px/25.000px 'Liberation Sans';color:#3d3d3d;transform:scaleY(1.08);transform-origin:50% 50%">Пассив</div>
<svg class="ico" style="left:21px;top:1017.3px" width="14" height="14" viewBox="0 0 14 14"><circle cx="7" cy="7" r="6.7" fill="#404040"/><path d="M3.5 7 H10.5" stroke="#fff" stroke-width="2.2"/></svg>
<div class="t" style="left:485px;top:1015.3px;width:280px;text-align:right;font:bold 17.6px/20px 'Liberation Mono';word-spacing:-7.6px;transform:translateY(0.1px) scaleY(1.1);color:#245a8c">21 901 885</div>
<div class="t" style="left:768px;top:1015.3px;width:280px;text-align:right;font:bold 17.6px/20px 'Liberation Mono';word-spacing:-7.6px;transform:translateY(0.1px) scaleY(1.1);color:#e8421c"><svg width="12" height="12" viewBox="0 0 12 12" style="margin-right:2px;vertical-align:0px"><path d="M6 0 L12 12 H0Z" fill="#e8421c"/></svg>64%</div>
<div class="t" style="left:1051px;top:1015.3px;width:280px;text-align:right;font:bold 17.6px/20px 'Liberation Mono';word-spacing:-7.6px;transform:translateY(0.1px) scaleY(1.1);color:#7a7a7a">13 350 375</div>
<div class="t" style="left:1334px;top:1015.3px;width:280px;text-align:right;font:bold 17.6px/20px 'Liberation Mono';word-spacing:-7.6px;transform:translateY(0.1px) scaleY(1.1);color:#e8421c">109%</div>
<div class="t" style="left:1614px;top:1015.3px;width:280px;text-align:right;font:bold 17.6px/20px 'Liberation Mono';word-spacing:-7.6px;transform:translateY(0.1px) scaleY(1.1);color:#45a8d0">20 016 908</div>
<div class="a" style="left:73px;top:1041px;width:1834px;height:27px;background:linear-gradient(to bottom,#8ddff8 55%,#7fcfe6 100%)"></div>
<div class="t" style="left:78px;top:1042.20px;font:bold 16.3px/25.000px 'Liberation Sans';color:#3d3d3d;transform:scaleY(1.08);transform-origin:50% 50%"><span class=ri>I</span>. Собственный капитал</div>
<svg class="ico" style="left:51px;top:1047.3px" width="14" height="14" viewBox="0 0 14 14"><circle cx="7" cy="7" r="6.7" fill="#404040"/><path d="M3.5 7 H10.5 M7 3.5 V10.5" stroke="#fff" stroke-width="2.2"/></svg>
<div class="t" style="left:485px;top:1045.3px;width:280px;text-align:right;font:bold 17.6px/20px 'Liberation Mono';word-spacing:-7.6px;transform:translateY(0.1px) scaleY(1.1);color:#245a8c">5 781 890</div>
<div class="t" style="left:768px;top:1045.3px;width:280px;text-align:right;font:bold 17.6px/20px 'Liberation Mono';word-spacing:-7.6px;transform:translateY(0.1px) scaleY(1.1);color:#e8421c"><svg width="12" height="12" viewBox="0 0 12 12" style="margin-right:2px;vertical-align:0px"><path d="M6 0 L12 12 H0Z" fill="#e8421c"/></svg>46%</div>
<div class="t" style="left:1051px;top:1045.3px;width:280px;text-align:right;font:bold 17.6px/20px 'Liberation Mono';word-spacing:-7.6px;transform:translateY(0.1px) scaleY(1.1);color:#7a7a7a">3 964 517</div>
<div class="t" style="left:1334px;top:1045.3px;width:280px;text-align:right;font:bold 17.6px/20px 'Liberation Mono';word-spacing:-7.6px;transform:translateY(0.1px) scaleY(1.1);color:#e8421c">110%</div>
<div class="t" style="left:1614px;top:1045.3px;width:280px;text-align:right;font:bold 17.6px/20px 'Liberation Mono';word-spacing:-7.6px;transform:translateY(0.1px) scaleY(1.1);color:#45a8d0">5 234 465</div>
<div class="a" style="left:493px;top:248px;width:1px;height:819px;background:#a8a8a8"></div>
<div class="a" style="left:494px;top:303px;width:1413px;height:1px;background:#e3e3e3"></div>
<div class="a" style="left:494px;top:358px;width:1413px;height:1px;background:#e3e3e3"></div>
<div class="a" style="left:12px;top:413px;width:1896px;height:1px;background:#a0a0a0"></div>
<div class="a" style="left:775px;top:358px;width:1px;height:710px;background:#e3e3e3"></div>
<div class="a" style="left:1058px;top:358px;width:1px;height:710px;background:#e3e3e3"></div>
<div class="a" style="left:1341px;top:358px;width:1px;height:710px;background:#e3e3e3"></div>
<div class="a" style="left:1624px;top:358px;width:1px;height:710px;background:#e3e3e3"></div>
</body></html>
